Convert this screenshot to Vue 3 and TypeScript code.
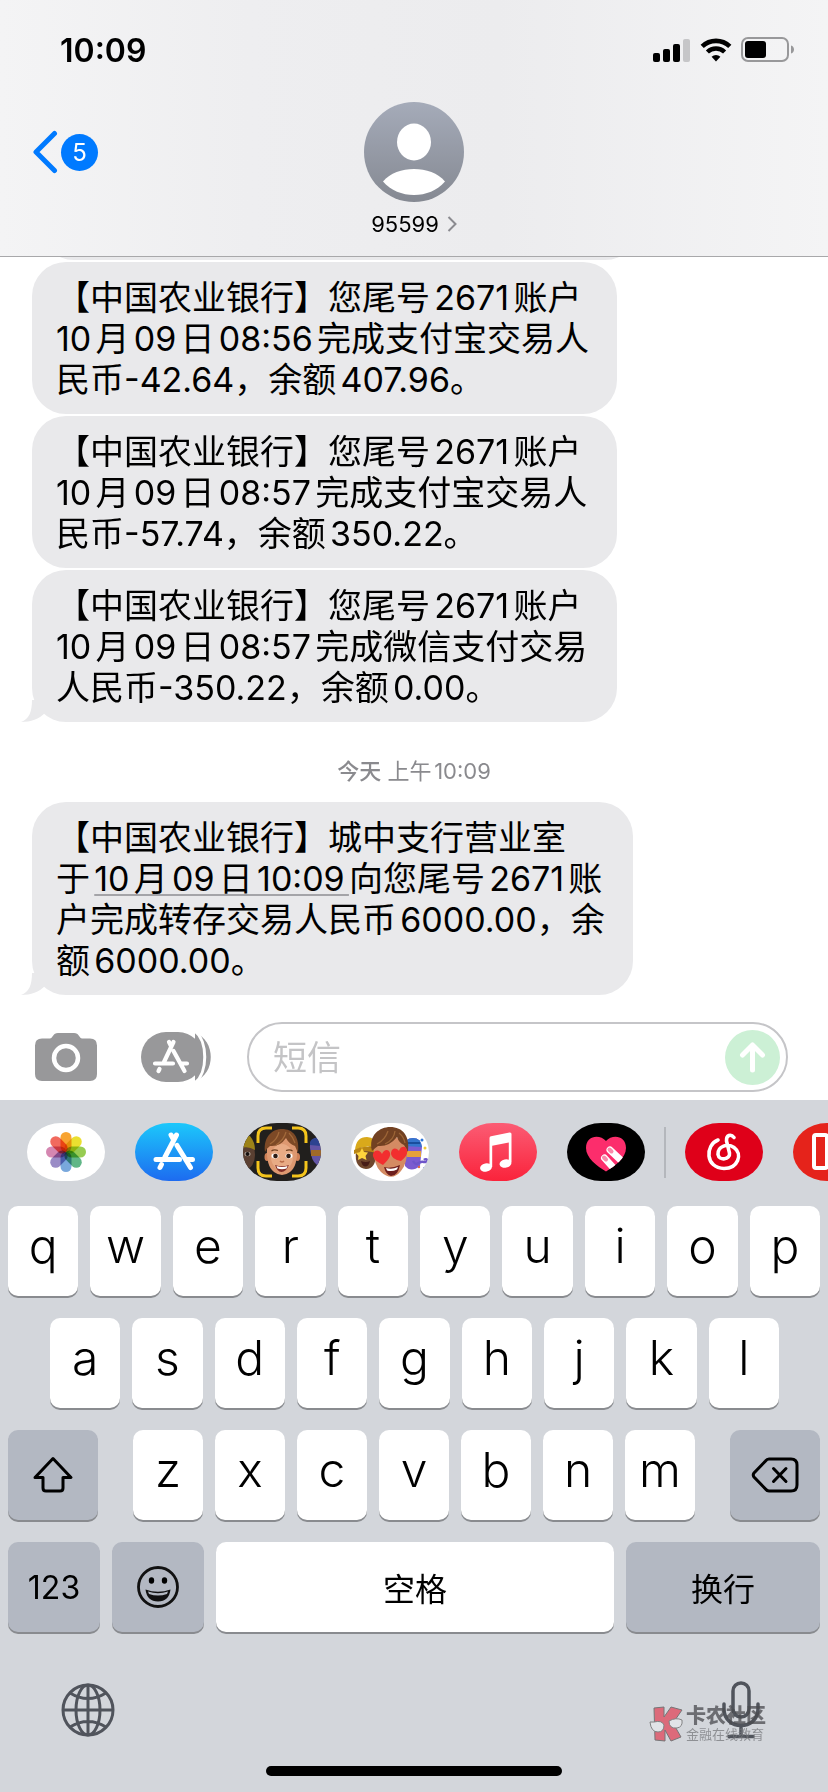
<script setup lang="ts">
import { ref } from 'vue'

interface Part {
  text: string
  link?: boolean
}

interface Message {
  id: number
  lines: Part[][]
  tail?: boolean
}

const earlier: Message[] = [
  {
    id: 1,
    lines: [
      [{ text: '【中国农业银行】您尾号2671账户' }],
      [{ text: '10月09日08:56完成支付宝交易人' }],
      [{ text: '民币-42.64，余额407.96。' }],
    ],
  },
  {
    id: 2,
    lines: [
      [{ text: '【中国农业银行】您尾号2671账户' }],
      [{ text: '10月09日08:57完成支付宝交易人' }],
      [{ text: '民币-57.74，余额350.22。' }],
    ],
  },
  {
    id: 3,
    tail: true,
    lines: [
      [{ text: '【中国农业银行】您尾号2671账户' }],
      [{ text: '10月09日08:57完成微信支付交易' }],
      [{ text: '人民币-350.22，余额0.00。' }],
    ],
  },
]

const latest: Message[] = [
  {
    id: 4,
    tail: true,
    lines: [
      [{ text: '【中国农业银行】城中支行营业室' }],
      [{ text: '于' }, { text: '10月09日10:09', link: true }, { text: '向您尾号2671账' }],
      [{ text: '户完成转存交易人民币6000.00，余' }],
      [{ text: '额6000.00。' }],
    ],
  },
]

const groups = [
  { id: 'earlier', stamp: false, messages: earlier },
  { id: 'latest', stamp: true, messages: latest },
]

const petals = ['#f79a1c', '#e8dc1a', '#8cc63f', '#4fae7a', '#6a9fd8', '#8f7fc0', '#d07aa8', '#ef5a4c']
const rowOne = [...'qwertyuiop']
const rowTwo = [...'asdfghjkl']
const rowThree = [...'zxcvbnm']

const draft = ref('')

function type(letter: string) {
  draft.value += letter
}

function erase() {
  draft.value = draft.value.slice(0, -1)
}
</script>

<template>
  <div class="phone" lang="zh-CN">
    <header class="header">
      <div class="status">
        <span class="clock">10:09</span>
        <div class="indicators">
          <svg width="38" height="24" viewBox="0 0 38 24" aria-hidden="true">
            <rect x="0" y="15" width="7" height="9" rx="2" />
            <rect x="10" y="11" width="7" height="13" rx="2" />
            <rect x="20" y="6" width="7" height="18" rx="2" />
            <rect x="30" y="1" width="7" height="23" rx="2" fill="#c6c6c8" />
          </svg>
          <svg width="32" height="24" viewBox="0 0 32 24" aria-hidden="true">
            <path d="M2.200 8.400A20 20 0 0 1 29.800 8.400" fill="none" stroke="#000" stroke-width="4.600" />
            <path d="M7.400 14A12.400 12.400 0 0 1 24.600 14" fill="none" stroke="#000" stroke-width="4.400" />
            <path d="M11.600 18.700A6.500 6.500 0 0 1 20.400 18.700L16 23.500Z" />
          </svg>
          <svg width="54" height="26" viewBox="0 0 54 26" aria-hidden="true">
            <rect x="1" y="1" width="46" height="23" rx="6" fill="none" stroke="#98989a" stroke-width="2" />
            <rect x="4" y="4" width="21" height="17" rx="3" />
            <path d="M50 8.500C54 9.500 54 15.500 50 16.500Z" fill="#98989a" />
          </svg>
        </div>
      </div>
      <nav class="nav">
        <button class="back" type="button" aria-label="返回">
          <svg width="26" height="44" viewBox="0 0 26 44" aria-hidden="true">
            <path d="M22.500 3.500L4 22L22.500 40.500" fill="none" stroke="#007aff" stroke-width="5" stroke-linecap="round" stroke-linejoin="round" />
          </svg>
          <span class="count">5</span>
        </button>
        <button class="contact" type="button">
          <svg width="100" height="100" viewBox="0 0 100 100" aria-hidden="true">
            <defs>
              <linearGradient id="avatar" x1="0" y1="0" x2="0" y2="1">
                <stop offset="0" stop-color="#a5abb9" />
                <stop offset="1" stop-color="#858992" />
              </linearGradient>
            </defs>
            <circle cx="50" cy="50" r="50" fill="url(#avatar)" />
            <ellipse cx="50" cy="40" rx="17" ry="18.500" fill="#fff" />
            <path d="M19 79.500C26 71 38 67 50 67S74 71 81 79.500C73 88.500 62 93 50 93S27 88.500 19 79.500Z" fill="#fff" />
          </svg>
          <span class="name">
            95599
            <svg width="10" height="16" viewBox="0 0 10 16" aria-hidden="true">
              <path d="M1.500 1L8.500 8L1.500 15" fill="none" stroke="#8b8b90" stroke-width="2" />
            </svg>
          </span>
        </button>
      </nav>
    </header>

    <main class="thread">
      <div class="peek"><div class="peek-bubble"></div></div>
      <section v-for="group in groups" :key="group.id" class="group">
        <p v-if="group.stamp" class="stamp"><strong>今天</strong> 上午10:09</p>
        <div class="stack">
          <article v-for="message in group.messages" :key="message.id" class="bubble">
            <p v-for="(line, index) in message.lines" :key="index" class="line">
              <template v-for="part in line" :key="part.text">
                <a v-if="part.link" href="#" class="date">{{ part.text }}</a>
                <template v-else>{{ part.text }}</template>
              </template>
            </p>
            <svg v-if="message.tail" class="tail" width="30" height="22" viewBox="0 0 30 22" aria-hidden="true">
              <path d="M11 0C11 12 8 19 0 22C10 22 18 19 24 13L30 0Z" fill="#e9e9eb" />
            </svg>
          </article>
        </div>
      </section>
    </main>

    <form class="composer" @submit.prevent="draft = ''">
      <button class="tool camera" type="button" aria-label="相机">
        <svg width="62" height="50" viewBox="0 0 62 50" aria-hidden="true">
          <path d="M7 6.500H15C17 6.500 18 3 20 1.800Q21 1 23 1H39Q41 1 42 1.800C44 3 45 6.500 47 6.500H55Q62 6.500 62 13.500V42Q62 49 55 49H7Q0 49 0 42V13.500Q0 6.500 7 6.500Z" fill="#98989a" />
          <circle cx="31" cy="26" r="12" fill="none" stroke="#fff" stroke-width="4.500" />
        </svg>
      </button>
      <button class="tool" type="button" aria-label="App">
        <svg width="70" height="50" viewBox="0 0 70 50" aria-hidden="true">
          <path d="M54 1C75 8 75 42 54 49Z" fill="#98989a" />
          <rect width="62" height="50" rx="25" fill="#98989a" />
          <path d="M54 -1C67 9 67 41 54 51" fill="none" stroke="#fff" stroke-width="3" />
          <g fill="none" stroke="#fff" stroke-width="4.200" stroke-linecap="round">
            <path d="M32.500 10L23 30M18.500 37L17.500 39M28 10L30 14M32.500 19L43.500 39M14 31.500H32M41 31.500H46" />
          </g>
        </svg>
      </button>
      <div class="field">
        <input v-model="draft" type="text" placeholder="短信" aria-label="短信" />
        <button class="send" type="submit" aria-label="发送">
          <svg width="55" height="55" viewBox="0 0 55 55" aria-hidden="true">
            <circle cx="27.500" cy="27.500" r="27.500" fill="#ccf0d5" />
            <path d="M27.500 40V16M17.500 25L27.500 15L37.500 25" fill="none" stroke="#fff" stroke-width="5" stroke-linecap="round" stroke-linejoin="round" />
          </svg>
        </button>
      </div>
    </form>

    <footer class="keyboard">
      <div class="apps">
        <button class="app" type="button" aria-label="照片">
          <svg viewBox="0 0 78 58" aria-hidden="true">
            <rect width="78" height="58" fill="#fff" />
            <g class="flower">
              <rect
                v-for="(color, index) in petals"
                :key="color"
                x="33.500"
                y="9"
                width="11"
                height="20"
                rx="5.500"
                :fill="color"
                fill-opacity="0.900"
                :transform="`rotate(${index * 45} 39 29)`"
              />
            </g>
          </svg>
        </button>
        <button class="app" type="button" aria-label="App Store">
          <svg viewBox="0 0 78 58" aria-hidden="true">
            <defs>
              <linearGradient id="store" x1="0" y1="0" x2="0" y2="1">
                <stop offset="0" stop-color="#1cc8fb" />
                <stop offset="1" stop-color="#1d6bf0" />
              </linearGradient>
            </defs>
            <rect width="78" height="58" fill="url(#store)" />
            <path d="M41.500 12L30 34M26.500 41.500L25 44.500M36 12L38.500 16.500M42 22.500L55.500 44.500M21 36.500H44.500M52.500 36.500H57.500" fill="none" stroke="#fff" stroke-width="5" stroke-linecap="round" />
          </svg>
        </button>
        <button class="app" type="button" aria-label="拟我表情">
          <svg viewBox="0 0 78 58" aria-hidden="true">
            <rect width="78" height="58" fill="#211f1d" />
            <ellipse cx="3" cy="32" rx="9" ry="14" fill="#5a4032" />
            <path d="M-4 26C-3 18 3 12 7 13Q12 19 12 27Q4 22-4 26Z" fill="#9c8318" />
            <ellipse cx="4.500" cy="31" rx="3" ry="2.200" fill="#b8aca2" />
            <circle cx="4.500" cy="31" r="2" fill="#16110e" />
            <path d="M67 25Q66 15 76 14H80V42H74Q68 38 67 25Z" fill="#6355a5" />
            <path d="M67 19Q69 14 78 15V23L67 22Z" fill="#2d4390" />
            <rect x="68" y="27" width="12" height="6" fill="#a06a28" />
            <ellipse cx="24" cy="34" rx="2.500" ry="4" fill="#cf8158" />
            <ellipse cx="54.500" cy="34" rx="2.500" ry="4" fill="#cf8158" />
            <path d="M24 24Q23 43 31 49Q39 55 47 49Q55 43 54 24Q50 14 39 14T24 24Z" fill="#dd9870" />
            <ellipse cx="39" cy="34" rx="11" ry="13" fill="#e8ab85" />
            <path d="M22 29C20 13 30 6 39 6C50 6 57 14 55 30L52 23Q46 21 43 15Q37 24 27 23Q24 25 22 29Z" fill="#7d4926" />
            <path d="M27 21Q34 17 36 9M33 22Q41 17 43 9M46 10Q50 14 52 20" fill="none" stroke="#a36a3b" stroke-width="1.200" />
            <path d="M28.500 28Q31 26 35 27.500M43 27.500Q47 26 49.500 28" fill="none" stroke="#70401f" stroke-width="1.300" />
            <ellipse cx="32" cy="33" rx="3.500" ry="2.400" fill="#fff" />
            <ellipse cx="46" cy="33" rx="3.500" ry="2.400" fill="#fff" />
            <circle cx="32.500" cy="33" r="2.300" fill="#2b1a12" />
            <circle cx="45.500" cy="33" r="2.300" fill="#2b1a12" />
            <path d="M37 38Q39 40 41 38" fill="none" stroke="#b96c49" stroke-width="1.500" />
            <path d="M32 42Q39 44.500 46 42Q43 49 38.500 49Q34 48.500 32 42Z" fill="#812d27" />
            <path d="M33.500 43Q39 45 44.500 43L43.500 45.500Q39 47 34.500 45.500Z" fill="#fff" />
            <path d="M15 20V13Q15 5 23 5H29M49 5H55Q63 5 63 13V20M63 38V45Q63 53 55 53H49M29 53H23Q15 53 15 45V38" fill="none" stroke="#f4c41c" stroke-width="3" />
          </svg>
        </button>
        <button class="app" type="button" aria-label="拟我表情贴纸">
          <svg viewBox="0 0 78 58" aria-hidden="true">
            <rect width="78" height="58" fill="#fff" />
            <path d="M5 28Q3 45 15 46Q25 46 25 30L22 22Z" fill="#6f472d" />
            <path d="M4 27Q5 14 16 14Q25 14 26 25Q15 21 4 27Z" fill="#d9a91b" />
            <path d="M3 27Q14 21 25 26V30Q14 26 3 31Z" fill="#b98514" />
            <path d="M11 25L13 29L17 29.500L14.500 33L15.500 37L11 35L7 37L7.500 33L5 30L9 29Z" fill="#ffd43c" />
            <path d="M10 38Q15 40 19 38Q18 43.500 14 43.500Q11 43 10 38Z" fill="#471d17" />
            <path d="M53 23Q54 15 62 15T71 24L69 43Q60 50 54 43Z" fill="#7b5bd0" />
            <path d="M53 23Q54 15 62 15T71 24Z" fill="#3575cd" />
            <path d="M55 20H69" stroke="#1a4e9d" stroke-width="2" />
            <rect x="56" y="28" width="14" height="6" fill="#e6a13b" />
            <path d="M62 38C66 45 68 37 73 39C79 40 76 34 73 37" fill="none" stroke="#6e55c9" stroke-width="2.500" />
            <circle cx="71" cy="17" r="1.500" fill="#2d76d9" />
            <circle cx="74" cy="25" r="1.500" fill="#f1ca39" />
            <circle cx="68" cy="44" r="1.200" fill="#e06a43" />
            <circle cx="73" cy="45" r="1" fill="#4b69d9" />
            <path d="M23 24Q22 42 30 49Q41 59 50 48Q57 40 56 23L45 14H32Z" fill="#d48b63" />
            <path d="M21 28C17 12 29 4 39 4C52 4 59 13 57 29L53 22Q48 20 46 14Q38 24 27 23Q24 25 21 28Z" fill="#724122" />
            <path d="M26 21Q34 17 37 8M34 21Q43 17 44 8M48 10Q53 14 54 20" fill="none" stroke="#9b6436" stroke-width="1.300" />
            <path d="M33 44Q40 46 49 42Q47 53 40 53Q35 52 33 44Z" fill="#6e1f1e" />
            <path d="M35 45Q41 47 47 44L46 46.500Q41 49 36 47.500Z" fill="#fff" />
            <path d="M32 42C26 39 21 35 22 31C24 26 29 27 31 31C33 26 38 26 39 30C40 34 36 38 32 42Z" fill="#f22e2f" />
            <path d="M50 38C44 37 40 34 40 30C41 24 46 25 48 28C49 23 55 22 56 27C57 31 54 35 50 38Z" fill="#f22e2f" />
          </svg>
        </button>
        <button class="app" type="button" aria-label="音乐">
          <svg viewBox="0 0 78 58" aria-hidden="true">
            <defs>
              <linearGradient id="music" x1="0" y1="0" x2="0" y2="1">
                <stop offset="0" stop-color="#fb5c74" />
                <stop offset="1" stop-color="#fa233b" />
              </linearGradient>
            </defs>
            <rect width="78" height="58" fill="url(#music)" />
            <path d="M30.500 15Q30.500 13.500 32 13.200L50.500 9.500Q52.500 9.200 52.500 11V39H49.800V19.500L33.200 22.800V44H30.500Z" fill="#fff" />
            <ellipse cx="27" cy="44.500" rx="6" ry="4.200" fill="#fff" transform="rotate(-12 27 44.500)" />
            <ellipse cx="46.500" cy="40.500" rx="6" ry="4.200" fill="#fff" transform="rotate(-12 46.500 40.500)" />
          </svg>
        </button>
        <button class="app" type="button" aria-label="Digital Touch">
          <svg viewBox="0 0 78 58" aria-hidden="true">
            <defs>
              <clipPath id="heart">
                <path d="M39 48.500C30 43 19 35 19 25C19 12 33 11 39 18C45 11 59 12 59 25C59 35 48 43 39 48.500Z" />
              </clipPath>
            </defs>
            <rect width="78" height="58" fill="#000" />
            <g clip-path="url(#heart)">
              <rect width="78" height="58" fill="#fc2d6c" />
              <path d="M37.500 35L52 51M43 27L62 45" stroke="#fff" stroke-width="7" stroke-linecap="round" />
              <path d="M37 34.500L39 36.500M42.500 26.500L44.500 28.500" stroke="#f88cab" stroke-width="4" stroke-linecap="round" />
            </g>
          </svg>
        </button>
        <span class="divider"></span>
        <button class="app" type="button" aria-label="网易云音乐">
          <svg viewBox="0 0 78 58" aria-hidden="true">
            <rect width="78" height="58" fill="#df0019" />
            <path d="M33 17C20 22 20 45 39 45.500C53 45.500 58 31 49 24.500C43 20 32.500 23 33 31.500C34 38 45.500 37 44.500 30L41.500 18C41 12 46 10.500 49 14.500" fill="none" stroke="#fff" stroke-width="3.600" stroke-linecap="round" />
          </svg>
        </button>
        <button class="app" type="button" aria-label="更多应用">
          <svg viewBox="0 0 78 58" aria-hidden="true">
            <rect width="78" height="58" fill="#e5231b" />
            <rect x="21" y="12" width="13" height="33" rx="2" fill="none" stroke="#fff" stroke-width="4" />
          </svg>
        </button>
      </div>

      <div class="keys">
        <div class="row">
          <button v-for="key in rowOne" :key="key" class="key" type="button" @click="type(key)">{{ key }}</button>
        </div>
        <div class="row inset">
          <button v-for="key in rowTwo" :key="key" class="key" type="button" @click="type(key)">{{ key }}</button>
        </div>
        <div class="row-shift">
          <button class="key dark" type="button" aria-label="大写">
            <svg width="42" height="38" viewBox="0 0 42 38" aria-hidden="true">
              <path d="M21 2.500L39 21.500H31V32Q31 35 28 35H14Q11 35 11 32V21.500H3Z" fill="none" stroke="#000" stroke-width="3" stroke-linejoin="round" />
            </svg>
          </button>
          <div class="row">
            <button v-for="key in rowThree" :key="key" class="key" type="button" @click="type(key)">{{ key }}</button>
          </div>
          <button class="key dark" type="button" aria-label="删除" @click="erase">
            <svg width="48" height="36" viewBox="0 0 48 36" aria-hidden="true">
              <path d="M18 2H40Q46 2 46 8V28Q46 34 40 34H18Q16 34 14.500 32L3 20Q1.500 18 3 16L14.500 4Q16 2 18 2Z" fill="none" stroke="#000" stroke-width="3" />
              <path d="M22.500 11.500L35 24.500M35 11.500L22.500 24.500" stroke="#000" stroke-width="3" stroke-linecap="round" />
            </svg>
          </button>
        </div>
        <div class="row-space">
          <button class="key dark label" type="button">123</button>
          <button class="key dark" type="button" aria-label="表情">
            <svg width="42" height="42" viewBox="0 0 42 42" aria-hidden="true">
              <circle cx="21" cy="21" r="19.500" fill="none" stroke="#111" stroke-width="2.800" />
              <ellipse cx="14.500" cy="14.500" rx="2.700" ry="3.200" />
              <ellipse cx="27.500" cy="14.500" rx="2.700" ry="3.200" />
              <path d="M8.500 23.500Q21 28 33.500 23.500Q32 35.500 21 35.500T8.500 23.500Z" fill="#111" />
              <path d="M11 25.500Q21 29 31 25.500L30 28Q21 31 12 28Z" fill="#b3b8c2" />
            </svg>
          </button>
          <button class="key label" type="button" @click="type(' ')">空格</button>
          <button class="key dark label" type="button">换行</button>
        </div>
      </div>

      <div class="system">
        <button class="plain" type="button" aria-label="切换键盘">
          <svg width="54" height="54" viewBox="0 0 54 54" aria-hidden="true">
            <g fill="none" stroke="#50545c" stroke-width="3">
              <circle cx="27" cy="27" r="25" />
              <ellipse cx="27" cy="27" rx="12" ry="25" />
              <path d="M27 2V52M2 27H52M9 10Q27 21 45 10M9 44Q27 33 45 44" />
            </g>
          </svg>
        </button>
        <button class="plain" type="button" aria-label="听写">
          <svg width="38" height="58" viewBox="0 0 38 58" aria-hidden="true">
            <g fill="none" stroke="#50545c" stroke-width="3.500" stroke-linecap="round">
              <rect x="11" y="2" width="16" height="34" rx="8" />
              <path d="M2 23V28C2 50 36 50 36 28V23M19 45V55M7 55.500H31" />
            </g>
          </svg>
        </button>
        <div class="watermark">
          <svg width="35" height="36" viewBox="0 0 35 36" aria-hidden="true">
            <path d="M5 2L15 1V11L22 1L33 4L24 17L32 31L22 35L16 24V35L6 34Z" fill="#e0465a" stroke="#555" stroke-width="1" />
            <path d="M1 16L5 16Q13 14 15 19Q15 26 9 26Q2 26 1 16ZM20 15Q27 11 33 14Q34 21 28 22Q20 23 20 15Z" fill="#e6e8eb" stroke="#666" stroke-width="1" />
          </svg>
          <div class="brand">
            <strong>卡农社区</strong>
            <small>金融在线教育</small>
          </div>
        </div>
      </div>
      <div class="home"></div>
    </footer>
  </div>
</template>

<style>
body {
  margin: 0;
  background: #fff;
}
</style>

<style scoped>
.phone {
  display: flex;
  flex-direction: column;
  min-height: 100vh;
  overflow: hidden;
  background: #fff;
  color: #000;
  font-family: Inter, "Noto Sans CJK SC", sans-serif;
}

button {
  padding: 0;
  border: 0;
  background: none;
  color: inherit;
  font: inherit;
  cursor: pointer;
}

svg {
  display: block;
  flex-shrink: 0;
}

p {
  margin: 0;
}

.header {
  border-bottom: 1px solid #a8a8aa;
  background: linear-gradient(90deg, #f4f4f5, #eeeef0 30%, #ececee 60%, #f4f4f5);
}

.status {
  display: flex;
  align-items: center;
  justify-content: space-between;
  height: 100px;
  padding: 0 33px 0 60px;
}

.clock {
  font-size: 32px;
  font-weight: 600;
}

.indicators {
  display: flex;
  align-items: center;
  gap: 9px;
}

.nav {
  display: grid;
  grid-template-columns: 1fr auto 1fr;
  align-items: start;
  padding: 2px 32px 16px;
}

.back {
  display: flex;
  align-items: center;
  justify-self: start;
  gap: 3px;
  padding-top: 28px;
}

.count {
  width: 37px;
  border-radius: 50%;
  background: #007aff;
  color: #fff;
  font-size: 24px;
  line-height: 37px;
}

.contact {
  display: flex;
  flex-direction: column;
  align-items: center;
  gap: 6px;
}

.name {
  display: flex;
  align-items: center;
  gap: 8px;
  font-size: 22px;
  line-height: 32px;
}

.thread {
  display: flex;
  flex: 1;
  flex-direction: column;
}

.peek {
  display: flex;
  flex-direction: column;
  justify-content: flex-end;
  height: 3px;
  margin-bottom: 2px;
  padding-left: 40px;
  overflow: hidden;
}

.peek-bubble {
  flex-shrink: 0;
  width: 76%;
  height: 68px;
  border-radius: 34px;
  background: #e9e9eb;
}

.group {
  display: flex;
  flex-direction: column;
  align-items: flex-start;
  padding: 0 32px;
}

.stack {
  display: grid;
  gap: 2px;
}

.stamp {
  align-self: center;
  margin: 31px 0 13px;
  color: #8a8a8e;
  font-size: 22px;
  line-height: 36px;
  text-autospace: normal;
}

.stamp strong {
  font-weight: 500;
}

.bubble {
  position: relative;
  padding: 15px 28px 14px 24px;
  border-radius: 34px;
  background: #e9e9eb;
}

.line {
  font-size: 34px;
  line-height: 41px;
  white-space: nowrap;
  text-autospace: normal;
}

.date {
  color: inherit;
  text-decoration: underline;
  text-decoration-color: #a4a4a8;
  text-decoration-thickness: 2px;
  text-decoration-skip-ink: none;
  text-underline-offset: 3px;
}

.tail {
  position: absolute;
  bottom: 0;
  left: -11px;
}

.composer {
  display: flex;
  align-items: center;
  padding: 27px 40px 8px 35px;
}

.tool {
  flex-shrink: 0;
}

.camera {
  margin-right: 44px;
}

.field {
  display: flex;
  flex: 1;
  align-items: center;
  min-width: 0;
  margin-left: 36px;
  padding: 5px 6px 5px 24px;
  border: 2px solid #c5c5c8;
  border-radius: 35px;
}

.field input {
  flex: 1;
  min-width: 0;
  height: 56px;
  padding: 0;
  border: 0;
  outline: 0;
  background: none;
  font-family: inherit;
  font-size: 34px;
}

.field input::placeholder {
  color: #c4c4c6;
}

.keyboard {
  background: #d3d6db;
}

.apps {
  display: flex;
  align-items: center;
  gap: 30px;
  padding: 23px 0 25px 27px;
  overflow: hidden;
}

.app {
  flex-shrink: 0;
  width: 78px;
  height: 58px;
  overflow: hidden;
  border-radius: 34px / 29px;
}

.flower rect {
  mix-blend-mode: multiply;
}

.divider {
  flex-shrink: 0;
  width: 2px;
  height: 51px;
  margin: 0 -11px;
  background: #b4b7bc;
}

.keys {
  display: flex;
  flex-direction: column;
  gap: 22px;
  padding: 0 8px;
}

.row {
  display: flex;
  gap: 12px;
}

.row .key {
  flex: 1;
}

.inset {
  padding: 0 41px 0 42px;
}

.row-shift {
  display: grid;
  grid-template-columns: 90px 1fr 90px;
  gap: 35px;
}

.row-space {
  display: grid;
  grid-template-columns: 92px 92px 1fr 194px;
  gap: 12px;
}

.key {
  display: flex;
  align-items: center;
  justify-content: center;
  min-width: 0;
  height: 90px;
  padding-bottom: 12px;
  border-radius: 10px;
  background: #fff;
  box-shadow: 0 2px 0 #898b8f;
  font-size: 48px;
  font-weight: 350;
}

.key.dark {
  padding-bottom: 0;
  background: #b3b8c2;
}

.key.label {
  padding-bottom: 0;
  font-size: 32px;
  font-weight: 400;
}

.system {
  position: relative;
  display: flex;
  align-items: center;
  justify-content: space-between;
  padding: 49px 68px 0 61px;
}

.watermark {
  position: absolute;
  right: 62px;
  bottom: -3px;
  display: flex;
  align-items: center;
  gap: 2px;
  opacity: 0.75;
  pointer-events: none;
}

.brand {
  display: flex;
  flex-direction: column;
  color: #4a4b4f;
}

.brand strong {
  font-size: 20px;
  font-weight: 900;
  line-height: 20px;
}

.brand small {
  color: #77797d;
  font-size: 13px;
  line-height: 16px;
}

.home {
  width: 296px;
  height: 10px;
  margin: 27px auto 16px;
  border-radius: 5px;
  background: #000;
}
</style>
